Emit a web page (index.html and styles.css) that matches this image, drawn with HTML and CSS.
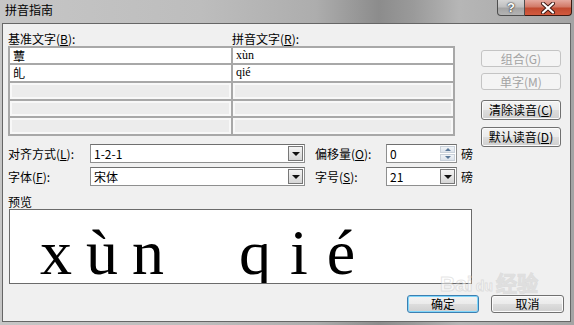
FILE: index.html
```html
<!DOCTYPE html>
<html lang="zh-CN">
<head>
    <meta charset="UTF-8">
    <title>拼音指南</title>
    <link rel="stylesheet" href="styles.css">
</head>
<body>

<div class="window">
    <div class="titlebar">
        <span class="title">拼音指南</span>
        <div class="caption">
            <span class="cap help">?</span>
            <span class="cap close">
                <svg width="16" height="12" viewBox="0 0 16 12">
                    <path d="M3 1.5 L13 10.5 M13 1.5 L3 10.5" stroke="#3a1510" stroke-width="4" stroke-linecap="round"/>
                    <path d="M3 1.5 L13 10.5 M13 1.5 L3 10.5" stroke="#fff" stroke-width="2.2" stroke-linecap="round"/>
                </svg>
            </span>
        </div>
    </div>

    <div class="client">
        <div class="main">
            <div class="left">
                <div class="grid-head">
                    <span class="head-base">基准文字(<u>B</u>):</span>
                    <span>拼音文字(<u>R</u>):</span>
                </div>
                <div class="grid">
                    <div class="cell">蕈</div>
                    <div class="cell pinyin">xùn</div>
                    <div class="cell">癿</div>
                    <div class="cell pinyin">qié</div>
                    <div class="cell empty"></div>
                    <div class="cell empty"></div>
                    <div class="cell empty"></div>
                    <div class="cell empty"></div>
                    <div class="cell empty"></div>
                    <div class="cell empty"></div>
                </div>

                <div class="opt-row first">
                    <span class="opt-label">对齐方式(<u>L</u>):</span>
                    <div class="combo wide"><span class="value">1-2-1</span><span class="drop"></span></div>
                    <span class="opt-label2">偏移量(<u>O</u>):</span>
                    <div class="combo narrow"><span class="value">0</span>
                        <span class="spin"><span class="up"></span><span class="down"></span></span>
                    </div>
                    <span class="unit">磅</span>
                </div>
                <div class="opt-row">
                    <span class="opt-label">字体(<u>F</u>):</span>
                    <div class="combo wide"><span class="value">宋体</span><span class="drop"></span></div>
                    <span class="opt-label2">字号(<u>S</u>):</span>
                    <div class="combo narrow"><span class="value">21</span><span class="drop"></span></div>
                    <span class="unit">磅</span>
                </div>

                <div class="preview-label">预览</div>
                <div class="preview">
                    <span class="syl">xùn</span><span class="syl second">qié</span>
                </div>
            </div>

            <div class="side">
                <button class="btn disabled b1">组合(G)</button>
                <button class="btn disabled b2">单字(M)</button>
                <button class="btn b3">清除读音(<u>C</u>)</button>
                <button class="btn b4">默认读音(<u>D</u>)</button>
            </div>
        </div>

        <div class="footer">
            <button class="btn default">确定</button>
            <button class="btn cancel">取消</button>
        </div>
    </div>

    <div class="watermark">Bai<span class="paw">du</span>经验</div>
</div>

</body>
</html>
```

FILE: styles.css
```css
body {
    margin: 0;
    font-family: "Noto Sans CJK SC", sans-serif;
    font-size: 12px;
    color: #000;
}
u {
    text-decoration: underline;
}
.window {
    position: relative;
    width: 574px;
    height: 325px;
    padding: 0 3px 0 2px;
    box-sizing: border-box;
    overflow: hidden;
    background: linear-gradient(90deg, #c6c6c6 0%, #bdbdbd 35%, #adadad 55%, #8c8c8c 66%, #9a9a9a 72%, #b6b6b6 80%, #a4a4a4 100%);
}
.titlebar {
    height: 23px;
    display: flex;
    justify-content: space-between;
}
.title {
    padding: 2px 0 0 3px;
    line-height: 16px;
    font-size: 12px;
}
.caption {
    display: flex;
    align-self: flex-start;
    margin-right: -1px;
}
.cap {
    height: 16px;
    box-sizing: border-box;
    display: flex;
    align-items: center;
    justify-content: center;
}
.help {
    width: 28px;
    border: 1px solid #4e4e4e;
    border-top: none;
    border-radius: 0 0 0 4px;
    background: linear-gradient(#d6d6d6 0%, #c0c0c0 45%, #a4a4a4 55%, #b4b4b4 100%);
    color: #fff;
    font-family: "Liberation Sans", sans-serif;
    font-weight: bold;
    font-size: 13px;
    text-shadow: 0 0 2px #222, 0 0 1px #222;
}
.close {
    width: 47px;
    border: 1px solid #3e1a12;
    border-left: none;
    border-top: none;
    border-radius: 0 0 4px 0;
    background: linear-gradient(#e5a99f 0%, #d27a68 45%, #c14a30 55%, #d35a3e 100%);
}
.client {
    height: 299px;
    box-sizing: border-box;
    border: 1px solid #666;
    background: #f0f0f0;
}
.main {
    display: flex;
    padding: 7px 0 0 5px;
}
.left {
    width: 465px;
}
.grid-head {
    display: flex;
    height: 15px;
    line-height: 15px;
}
.head-base {
    width: 224px;
}
.grid {
    width: 447px;
    box-sizing: border-box;
    display: grid;
    grid-template-columns: 221px 220px;
    grid-template-rows: 15px 16px 16px 15px 16px;
    gap: 2px;
    padding: 2px;
    background: #a8a8a8;
}
.cell {
    background: #fff;
    padding-left: 3px;
    line-height: 15px;
    overflow: hidden;
}
.cell.pinyin {
    font-family: "Liberation Serif", serif;
    font-size: 12px;
}
.cell.empty {
    background: #ececec;
    box-shadow: inset 0 0 0 2px #f8f8f8;
}
.opt-row {
    display: flex;
    align-items: center;
    height: 19px;
    margin-top: 4px;
}
.opt-row.first {
    margin-top: 8px;
}
.opt-label {
    width: 82px;
}
.opt-label2 {
    width: 71px;
    margin-left: 10px;
}
.combo {
    height: 19px;
    box-sizing: border-box;
    border: 1px solid #8e8f8f;
    border-top-color: #6f6f6f;
    background: #fff;
    display: flex;
    align-items: center;
    justify-content: space-between;
}
.combo.wide {
    width: 215px;
}
.combo.narrow {
    width: 71px;
}
.value {
    padding-left: 3px;
    line-height: 15px;
}
.drop {
    width: 15px;
    height: 15px;
    margin-right: 1px;
    box-sizing: border-box;
    border: 1px solid #777;
    background: linear-gradient(#f4f4f4, #d6d6d6);
    display: flex;
    align-items: center;
    justify-content: center;
}
.drop::after {
    content: "";
    border-left: 4px solid transparent;
    border-right: 4px solid transparent;
    border-top: 4px solid #111;
}
.spin {
    width: 15px;
    height: 15px;
    margin-right: 1px;
    display: flex;
    flex-direction: column;
    gap: 1px;
}
.spin span {
    flex: 1;
    background: linear-gradient(#f1f4f7, #dde4ec);
    border: 1px solid #c9d1da;
    display: flex;
    align-items: center;
    justify-content: center;
}
.spin .up::after {
    content: "";
    border-left: 3px solid transparent;
    border-right: 3px solid transparent;
    border-bottom: 3px solid #5a7899;
}
.spin .down::after {
    content: "";
    border-left: 3px solid transparent;
    border-right: 3px solid transparent;
    border-top: 3px solid #5a7899;
}
.unit {
    margin-left: 4px;
}
.preview-label {
    margin-top: 8px;
    line-height: 15px;
}
.preview {
    width: 463px;
    height: 75px;
    margin-left: 1px;
    box-sizing: border-box;
    border: 1px solid #6b6b6b;
    background: #fff;
    padding: 11px 0 0 30px;
    overflow: hidden;
    white-space: nowrap;
    font-family: "Liberation Serif", serif;
    font-size: 64px;
    line-height: 64px;
}
.syl {
    letter-spacing: 14px;
}
.syl.second {
    margin-left: 61px;
    letter-spacing: 19px;
}
.side {
    width: 80px;
    margin-left: 8px;
    display: flex;
    flex-direction: column;
}
.btn {
    box-sizing: border-box;
    border: 1px solid #707070;
    border-radius: 3px;
    background: linear-gradient(#f3f3f3 0%, #ebebeb 48%, #dddddd 52%, #cfcfcf 100%);
    box-shadow: inset 0 0 0 1px #fbfbfb;
    font-family: "Noto Sans CJK SC", sans-serif;
    font-size: 12px;
    line-height: 14px;
    padding: 0;
    color: #000;
}
.btn.disabled {
    border-color: #c4c4c4;
    background: #f4f4f4;
    box-shadow: none;
    color: #a3a3a3;
}
.b1 { height: 17px; margin-top: 19px; }
.b2 { height: 17px; margin-top: 6px; }
.b3 { height: 20px; margin-top: 10px; }
.b4 { height: 20px; margin-top: 7px; }
.footer {
    display: flex;
    justify-content: flex-end;
    gap: 12px;
    margin-top: 11px;
    padding-right: 6px;
}
.footer .btn {
    height: 18px;
}
.btn.default {
    width: 72px;
    border-color: #3c7fb1;
    box-shadow: inset 0 0 0 1px #7fd6fb;
}
.btn.cancel {
    width: 73px;
}
.watermark {
    position: absolute;
    left: 440px;
    top: 273px;
    pointer-events: none;
    color: rgba(255, 255, 255, 0.5);
    font-family: "Liberation Sans", sans-serif;
    font-size: 21px;
    font-weight: bold;
    line-height: 22px;
    -webkit-text-stroke: 1px rgba(180, 180, 180, 0.35);
}
.paw {
    font-size: 14px;
    margin: 0 3px;
}
```
